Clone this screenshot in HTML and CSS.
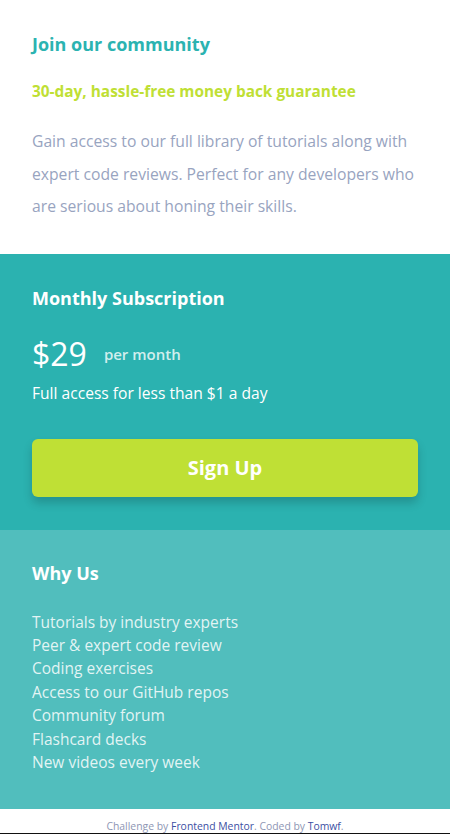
FILE: index.html
```html
<!DOCTYPE html>
<html lang="en">
<head>
<meta charset="utf-8">
<title>Single price grid component</title>
<link rel="stylesheet" href="styles.css">
</head>
<body>
<main class="card">
  <section class="intro">
    <h1 class="intro-title">Join our community</h1>
    <h2 class="intro-sub">30-day, hassle-free money back guarantee</h2>
    <p class="intro-text">Gain access to our full library of tutorials along with expert code reviews. Perfect for any developers who are serious about honing their skills.</p>
  </section>
  <section class="sub">
    <h2 class="sub-title">Monthly Subscription</h2>
    <div class="price-row">
      <span class="price">$29</span>
      <span class="per">per month</span>
    </div>
    <p class="sub-text">Full access for less than $1 a day</p>
    <button class="btn">Sign Up</button>
  </section>
  <section class="why">
    <h2 class="why-title">Why Us</h2>
    <ul class="why-list">
      <li>Tutorials by industry experts</li>
      <li>Peer &amp; expert code review</li>
      <li>Coding exercises</li>
      <li>Access to our GitHub repos</li>
      <li>Community forum</li>
      <li>Flashcard decks</li>
      <li>New videos every week</li>
    </ul>
  </section>
</main>
<footer class="attribution">
  Challenge by <a href="#">Frontend Mentor</a>. Coded by <a href="#">Tomwf</a>.
</footer>
</body>
</html>
```

FILE: styles.css
```css
* { box-sizing: border-box; }
html, body { margin: 0; padding: 0; }
body {
  font-family: "Open Sans", Lato, sans-serif;
  background: #fff;
  width: 450px;
}
h1, h2, p, ul { margin: 0; padding: 0; }
.intro {
  padding: 31px 32px 31px;
  background: #fff;
}
.intro-title {
  font-size: 18px;
  font-weight: 700;
  color: #2bb3b1;
  line-height: 26px;
}
.intro-sub {
  margin-top: 24px;
  font-size: 15.4px;
  font-weight: 700;
  color: #bfdf35;
  line-height: 22px;
}
.intro-text {
  margin-top: 22px;
  font-size: 15.7px;
  line-height: 32.5px;
  color: #98a4bf;
}
.sub {
  background: #2bb2b0;
  padding: 32px 32px 33px;
  color: #fff;
}
.sub-title {
  font-size: 18px;
  font-weight: 700;
  line-height: 24px;
}
.price-row {
  display: flex;
  align-items: center;
  gap: 17px;
  margin-top: 26px;
  height: 36px;
}
.price {
  font-size: 32px;
  line-height: 36px;
}
.per {
  font-size: 15px;
  font-weight: 600;
  color: rgba(255,255,255,0.8);
}
.sub-text {
  margin-top: 10px;
  font-size: 15.6px;
  line-height: 22px;
}
.btn {
  display: block;
  width: 100%;
  margin-top: 35px;
  height: 58px;
  border: 0;
  border-radius: 6px;
  background: #bfe035;
  color: #fff;
  font-family: inherit;
  font-size: 20px;
  font-weight: 700;
  box-shadow: 0 6px 10px rgba(0,0,0,0.18);
}
.why {
  background: #51bebd;
  padding: 31px 32px 35px;
  color: rgba(255,255,255,0.85);
}
.why-title {
  font-size: 18px;
  font-weight: 700;
  line-height: 24px;
  color: #fff;
}
.why-list {
  list-style: none;
  margin-top: 26px;
  font-size: 15.5px;
  line-height: 23.4px;
}
.attribution {
  height: 26px;
  padding-top: 11px;
  text-align: center;
  font-size: 10.4px;
  line-height: 13px;
  color: #8e96b4;
  border-bottom: 2px solid #111;
}
.attribution a {
  color: #3c4fa3;
  text-decoration: none;
}
```
